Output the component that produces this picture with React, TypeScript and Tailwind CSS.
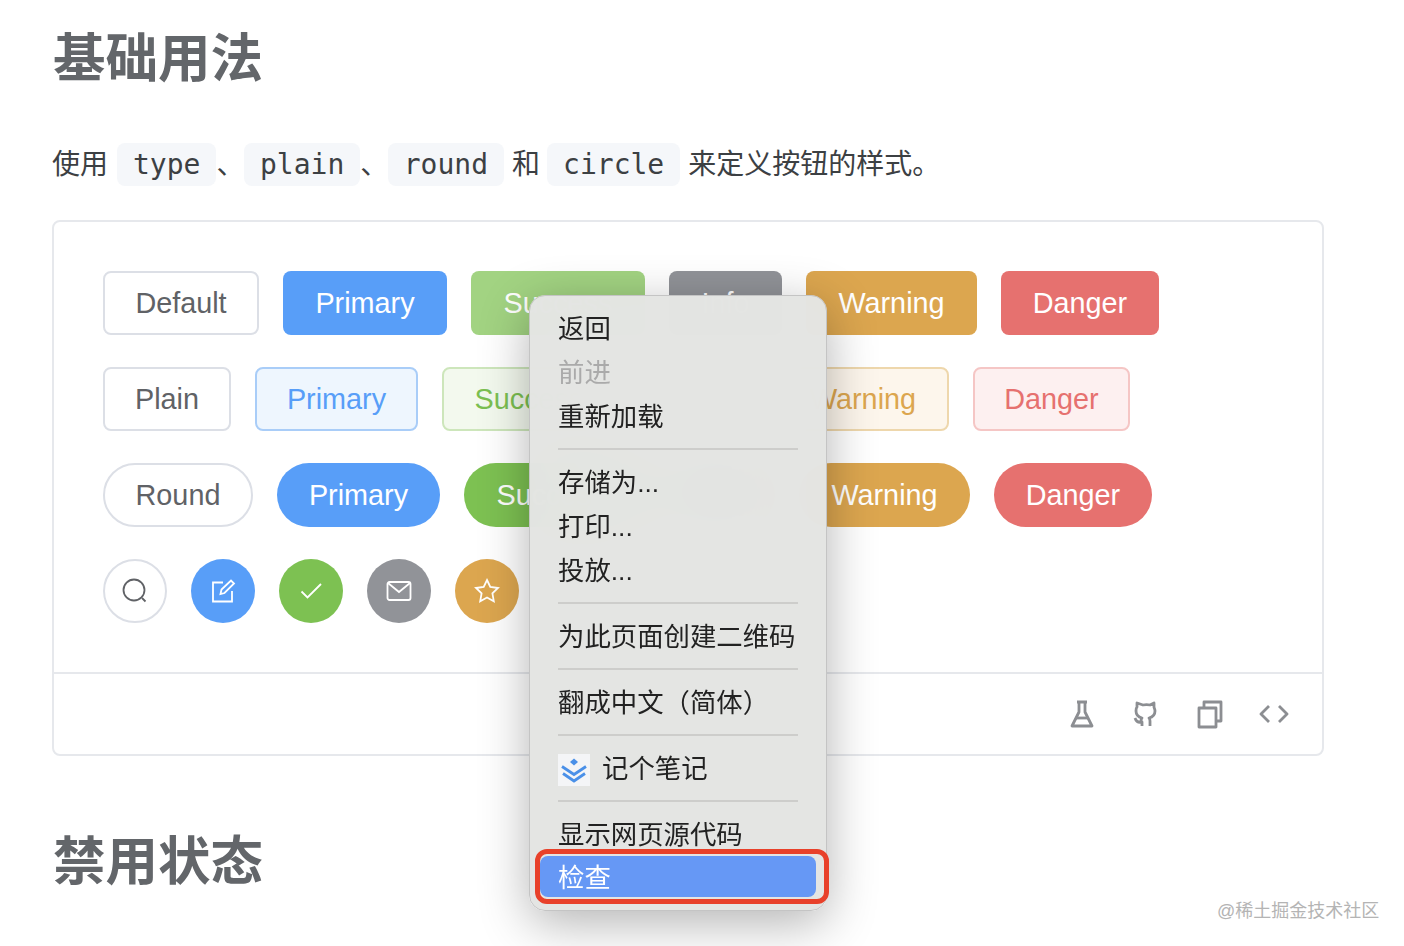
const SANS = "font-['Liberation_Sans','Noto_Sans_CJK_SC',sans-serif]";

const rows = [
  {
    style: "rounded-lg",
    items: [
      ["Default", "w-[156px] border-2 border-[#dcdfe6] bg-white text-[#606266]"],
      ["Primary", "w-[164px] bg-[#589ef8] text-white"],
      ["Success", "w-[174px] bg-[#a2d382] text-white"],
      ["Info", "w-[113px] bg-[#919398] text-white"],
      ["Warning", "w-[171px] bg-[#dca64f] text-white"],
      ["Danger", "w-[158px] bg-[#e6716f] text-white"],
    ],
  },
  {
    style: "rounded-lg",
    items: [
      ["Plain", "w-[128px] border-2 border-[#dcdfe6] bg-white text-[#606266]"],
      ["Primary", "w-[163px] border-2 border-[#a9cdf8] bg-[#eef6fe] text-[#589ef8]"],
      ["Success", "w-[174px] border-2 border-[#cde6bb] bg-[#f3f9ee] text-[#7cc052]"],
      ["Info", "w-[113px] border-2 border-[#d2d3d6] bg-[#f4f4f5] text-[#919398]"],
      ["Warning", "w-[172px] border-2 border-[#eed7ac] bg-[#fdf6ec] text-[#dca64f]"],
      ["Danger", "w-[157px] border-2 border-[#f5c6c5] bg-[#fdf0f0] text-[#e6716f]"],
    ],
  },
  {
    style: "rounded-full",
    items: [
      ["Round", "w-[150px] border-2 border-[#dcdfe6] bg-white text-[#606266]"],
      ["Primary", "w-[163px] bg-[#589ef8] text-white"],
      ["Success", "w-[174px] bg-[#7dc152] text-white"],
      ["Info", "w-[113px] bg-[#919398] text-white"],
      ["Warning", "w-[171px] bg-[#dca64f] text-white"],
      ["Danger", "w-[158px] bg-[#e6716f] text-white"],
    ],
  },
];

function Code({ children }: { children: string }) {
  return (
    <code className="flex h-[43px] items-center rounded-lg bg-[#f5f7fa] px-4 font-['DejaVu_Sans_Mono',monospace] text-[28px] text-[#3c4043]">
      {children}
    </code>
  );
}

function CircleIcon({ className, children }: { className: string; children: React.ReactNode }) {
  return (
    <div className={`flex h-16 w-16 items-center justify-center rounded-full ${className}`}>
      <svg viewBox="0 0 28 28" className="h-7 w-7" fill="none" stroke="currentColor" strokeWidth="1.8">
        {children}
      </svg>
    </div>
  );
}

function FooterIcon({ children }: { children: React.ReactNode }) {
  return (
    <svg viewBox="0 0 32 32" className="h-8 w-8" fill="none" stroke="#8c8e92" strokeWidth="2.8" strokeLinejoin="round">
      {children}
    </svg>
  );
}

function Item({ label, muted }: { label: string; muted?: boolean }) {
  return (
    <div className={`flex h-11 items-center whitespace-nowrap pl-7 pt-px text-[26.4px] ${muted ? "text-[#aaaaaa]" : "text-[#222222]"}`}>
      {label}
    </div>
  );
}

function Sep() {
  return (
    <div className="flex h-[22px] items-start px-7 pt-[9px]">
      <div className="h-0.5 w-full bg-[#cdcdcb]" />
    </div>
  );
}

function ContextMenu() {
  return (
    <div className={`absolute left-[529px] top-[295px] h-[616px] w-[298px] rounded-2xl border border-[#c4c4c4] bg-[#e3e4e2]/[0.98] pt-[11px] shadow-[0_12px_50px_rgba(0,0,0,0.3)] backdrop-blur-2xl ${SANS}`}>
      <Item label="返回" />
      <Item label="前进" muted />
      <Item label="重新加载" />
      <Sep />
      <Item label="存储为..." />
      <Item label="打印..." />
      <Item label="投放..." />
      <Sep />
      <Item label="为此页面创建二维码" />
      <Sep />
      <Item label="翻成中文（简体）" />
      <Sep />
      <div className="flex h-11 items-center gap-3 pl-7 pt-px text-[26.4px] text-[#222222]">
        <div className="flex h-8 w-8 items-center justify-center bg-[#f4f5f7]">
          <svg viewBox="0 0 32 32" className="h-8 w-8" fill="none">
            <path d="M16 4.500l4 3.500-4 3.500-4-3.500z" fill="#4a90e8" />
            <path d="M4 12.500l12 8 12-8" stroke="#4a90e8" strokeWidth="2.800" />
            <path d="M5 19.500l11 7.500 11-7.500" stroke="#4a90e8" strokeWidth="2.800" />
          </svg>
        </div>
        记个笔记
      </div>
      <Sep />
      <Item label="显示网页源代码" />
      <div className="mx-[10px] -mt-px flex h-[41px] w-[276px] items-center rounded-lg bg-[#6698f5] pl-[18px] pt-[5px] text-[26.4px] text-white">
        检查
      </div>
      {/* red annotation box */}
      <div className="absolute left-[5px] top-[553px] h-[55px] w-[294px] rounded-[12px] border-[5px] border-[#e8412a]" />
    </div>
  );
}

export default function App() {
  return (
    <div className={`relative h-[946px] w-[1404px] overflow-hidden bg-white pl-[53px] pt-[27px] text-[#3c4043] ${SANS}`}>
      <h2 className="h-[64px] text-[52.5px] font-bold leading-[64px] text-[#63666a]">基础用法</h2>

      <div className="-ml-px mt-[52px] flex h-[43px] items-center text-[28px]">
        <span className="mr-[9px]">使用</span>
        <Code>type</Code>
        <span className="w-[27.5px]">、</span>
        <Code>plain</Code>
        <span className="w-[27.5px]">、</span>
        <Code>round</Code>
        <span className="ml-[8px] mr-[7px]">和</span>
        <Code>circle</Code>
        <span className="ml-[8px]">来定义按钮的样式。</span>
      </div>

      <div className="-ml-px mt-[34px] h-[536px] w-[1272px] rounded-lg border-2 border-[#e6e8ec]">
        <div className="flex h-[450px] flex-col gap-8 px-[49px] pt-[49px]">
          {rows.map((row, i) => (
            <div key={i} className="flex gap-6">
              {row.items.map(([label, cls]) => (
                <button key={label} className={`flex h-16 items-center justify-center pt-px text-[28.8px] ${row.style} ${cls}`}>
                  {label}
                </button>
              ))}
            </div>
          ))}
          <div className="flex gap-6">
            <CircleIcon className="border-2 border-[#dcdfe6] bg-white text-[#606266]">
              <circle cx="13" cy="13" r="10.500" />
              <path d="M21 21l3.500 3.500" />
            </CircleIcon>
            <CircleIcon className="bg-[#589ef8] text-white">
              <path d="M14 5.500H4v19h19V14" />
              <path d="M11.500 17l1-4.500L22 3.500l3 3-9.500 9.500z" />
            </CircleIcon>
            <CircleIcon className="bg-[#7dc152] text-white">
              <path d="M4.500 14.500l6 6L24 7" />
            </CircleIcon>
            <CircleIcon className="bg-[#919398] text-white">
              <rect x="2.500" y="5" width="23" height="18" rx="2" />
              <path d="M3 6l11 9 11-9" />
            </CircleIcon>
            <CircleIcon className="bg-[#dca64f] text-white">
              <path d="M14 3l3.300 7 7.700 1-5.600 5.400 1.400 7.800L14 20.500l-6.800 3.700 1.400-7.800L3 11l7.700-1z" />
            </CircleIcon>
          </div>
        </div>
        <div className="flex h-[82px] items-center justify-end gap-8 border-t-2 border-[#e6e8ec] pr-[32px]">
          <FooterIcon>
            <path d="M11 4h10M13 4v10L6 28h20l-7-14V4" />
            <path d="M10 20h12" />
          </FooterIcon>
          <FooterIcon>
            <path d="M12 28v-4c-4 1-6-1-7-4M20 28v-5c0-2-1-3-1-3 4-1 6-3 6-7 0-2-1-3-1-4V5l-4 2c-2-.500-5-.500-7 0L7 5v4c-1 1-1 2-1 4 0 4 2 6 6 7 0 0-1 1-1 3" />
          </FooterIcon>
          <FooterIcon>
            <rect x="5" y="10" width="17" height="19" />
            <path d="M10 10V4h17v19h-5" />
          </FooterIcon>
          <FooterIcon>
            <path d="M11 8l-8 8 8 8M21 8l8 8-8 8" />
          </FooterIcon>
        </div>
      </div>

      <h2 className="mt-[74px] h-[64px] text-[52.5px] font-bold leading-[64px] text-[#63666a]">禁用状态</h2>

      <ContextMenu />

      <div className="absolute left-[1217px] top-[898px] text-[18px] text-[#b4b4b4]">@稀土掘金技术社区</div>
    </div>
  );
}
